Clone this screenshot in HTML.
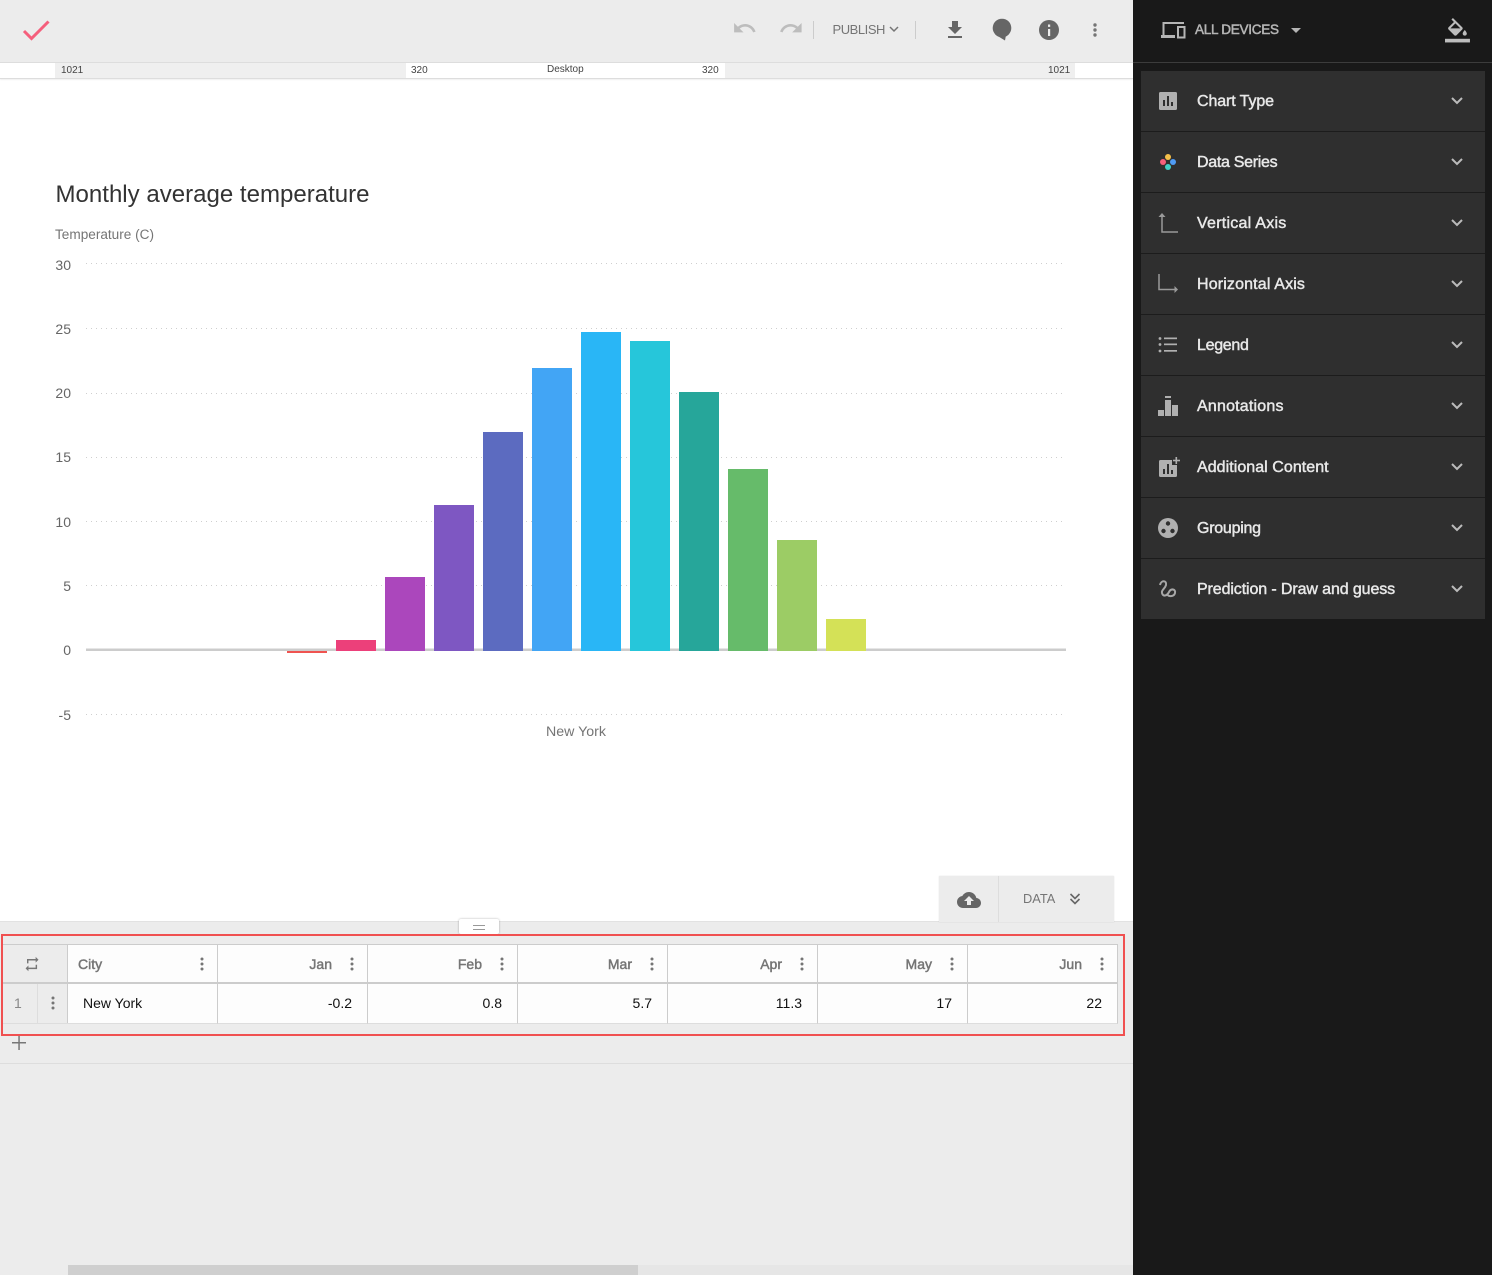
<!DOCTYPE html>
<html><head><meta charset="utf-8"><title>Chart editor</title>
<style>
html,body{margin:0;padding:0;width:1492px;height:1275px;overflow:hidden;background:#fff;font-family:"Liberation Sans",sans-serif}
.a,.t{position:absolute}
.t{white-space:nowrap}
.row{position:absolute;left:1141px;width:344px;height:60px;background:#2f2f2f;border-bottom:1px solid #1c1c1c}
.row span{position:absolute;left:56px;top:1px;line-height:59px;font-size:16px;color:#e8e8e8;-webkit-text-stroke:.45px #e8e8e8;white-space:nowrap}
.th,.td{position:absolute;width:149px;background:#fdfdfd;border-right:1px solid #ccc;box-sizing:content-box}
.th{top:945px;height:37px;line-height:38px;font-size:14px;color:#757575;-webkit-text-stroke:.45px #757575;text-align:right}
.th span{position:absolute;right:35px}
.td{top:984px;height:39px;line-height:39px;font-size:14px;color:#111;text-align:right;border-bottom:1px solid #ddd}
.td span{position:absolute;right:15px}
svg{position:absolute;left:0;top:0}
</style></head><body>

<div class="a" style="left:0;top:0;width:1133px;height:62px;background:#ececec"></div>
<div class="a" style="left:0;top:62px;width:1133px;height:17px;background:#fff;border-top:1px solid #ddd;border-bottom:1px solid #ddd;box-sizing:border-box;box-shadow:0 1px 1px rgba(0,0,0,.06)"></div>
<div class="a" style="left:55px;top:63px;width:351px;height:15px;background:#efefef"></div>
<div class="a" style="left:725px;top:63px;width:350px;height:15px;background:#efefef"></div>
<div class="t" style="left:61px;top:63px;line-height:15px;font-size:10px;color:#444">1021</div>
<div class="t" style="left:411px;top:63px;line-height:15px;font-size:10px;color:#444">320</div>
<div class="t" style="left:547px;top:62px;line-height:15px;font-size:10px;color:#444">Desktop</div>
<div class="t" style="left:702px;top:63px;line-height:15px;font-size:10px;color:#444">320</div>
<div class="t" style="left:1048px;top:63px;line-height:15px;font-size:10px;color:#444">1021</div>
<div class="t" style="left:832.5px;top:21px;line-height:18px;font-size:13px;letter-spacing:-.45px;color:#757575">PUBLISH</div>

<!-- sidebar -->
<div class="a" style="left:1133px;top:0;width:359px;height:1275px;background:#191919"></div>
<div class="a" style="left:1133px;top:62px;width:359px;height:1px;background:#3c3c3c"></div>
<div class="t" style="left:1195px;top:20px;line-height:20px;font-size:13.5px;letter-spacing:-.25px;color:#b5b5b5;-webkit-text-stroke:.5px #b5b5b5">ALL DEVICES</div>
<div class="row" style="top:71px"><span style="letter-spacing:-.1px">Chart Type</span></div>
<div class="row" style="top:132px"><span style="letter-spacing:-.3px">Data Series</span></div>
<div class="row" style="top:193px"><span style="letter-spacing:.25px">Vertical Axis</span></div>
<div class="row" style="top:254px"><span style="letter-spacing:.15px">Horizontal Axis</span></div>
<div class="row" style="top:315px"><span style="letter-spacing:-.3px">Legend</span></div>
<div class="row" style="top:376px"><span style="letter-spacing:.2px">Annotations</span></div>
<div class="row" style="top:437px"><span style="letter-spacing:.05px">Additional Content</span></div>
<div class="row" style="top:498px"><span style="letter-spacing:-.25px">Grouping</span></div>
<div class="row" style="top:559px;border-bottom:0"><span style="letter-spacing:-.11px">Prediction - Draw and guess</span></div>

<!-- data area -->
<div class="a" style="left:0;top:921px;width:1133px;height:354px;background:#ececec;border-top:1px solid #e2e2e2;box-sizing:border-box"></div>
<div class="a" style="left:939px;top:876px;width:175px;height:46px;background:#ececec;box-shadow:0 0 1px rgba(0,0,0,.15)"></div>
<div class="a" style="left:998px;top:876px;width:1px;height:46px;background:#ddd"></div>
<div class="t" style="left:1023px;top:890px;line-height:18px;font-size:12.8px;color:#757575">DATA</div>
<div class="a" style="left:459px;top:919px;width:40px;height:15px;background:#fff;border-radius:2px;box-shadow:0 0 2px rgba(0,0,0,.3)"></div>
<div class="a" style="left:473px;top:925px;width:12px;height:1px;background:#999"></div>
<div class="a" style="left:473px;top:929px;width:12px;height:1px;background:#999"></div>

<!-- table -->
<div class="a" style="left:2px;top:944px;width:1116px;height:1px;background:#ccc"></div>
<div class="a" style="left:2px;top:982px;width:1116px;height:2px;background:#ccc"></div>
<div class="a" style="left:37px;top:984px;width:1px;height:39px;background:#ddd"></div>
<div class="a" style="left:67px;top:945px;width:1px;height:78px;background:#ccc"></div>
<div class="a" style="left:2px;top:1023px;width:66px;height:1px;background:#ddd"></div>

<div class="th" style="left:68px;text-align:left"><span style="left:10px;right:auto">City</span></div>
<div class="th" style="left:218px"><span>Jan</span></div>
<div class="th" style="left:368px"><span>Feb</span></div>
<div class="th" style="left:518px"><span>Mar</span></div>
<div class="th" style="left:668px"><span>Apr</span></div>
<div class="th" style="left:818px"><span>May</span></div>
<div class="th" style="left:968px"><span>Jun</span></div>
<div class="td" style="left:68px;text-align:left"><span style="left:15px;right:auto">New York</span></div>
<div class="td" style="left:218px"><span>-0.2</span></div>
<div class="td" style="left:368px"><span>0.8</span></div>
<div class="td" style="left:518px"><span>5.7</span></div>
<div class="td" style="left:668px"><span>11.3</span></div>
<div class="td" style="left:818px"><span>17</span></div>
<div class="td" style="left:968px"><span>22</span></div>
<div class="t" style="left:14px;top:984px;line-height:39px;font-size:14px;color:#888">1</div>

<div class="a" style="left:0;top:1063px;width:1133px;height:1px;background:#ddd"></div>
<div class="a" style="left:638px;top:1265px;width:495px;height:10px;background:#e6e6e6"></div>
<div class="a" style="left:68px;top:1265px;width:570px;height:10px;background:#cfcfcf"></div>
<div class="a" style="left:1px;top:934px;width:1124px;height:102px;border:2px solid #f05050;box-sizing:border-box"></div>

<svg width="1492" height="1275" viewBox="0 0 1492 1275" xmlns="http://www.w3.org/2000/svg" style="pointer-events:none">
  <!-- top bar icons -->
  <polyline points="24,31 31.5,38.5 48.5,21.5" fill="none" stroke="#f55f7c" stroke-width="3"/>
  <path transform="translate(732,15.6) scale(1.05)" fill="#bdbdbd" d="M12.5 8c-2.65 0-5.05.99-6.9 2.6L2 7v9h9l-3.62-3.62c1.39-1.16 3.16-1.88 5.12-1.88 3.54 0 6.55 2.31 7.6 5.5l2.37-.78C21.08 11.03 17.15 8 12.5 8z"/>
  <path transform="translate(778.5,15.6) scale(1.05)" fill="#bdbdbd" d="M18.4 10.6C16.55 8.99 14.15 8 11.5 8c-4.65 0-8.58 3.03-9.96 7.22L3.9 16c1.05-3.19 4.05-5.5 7.6-5.5 1.95 0 3.73.72 5.12 1.88L13 16h9V7l-3.6 3.6z"/>
  <rect x="813" y="21" width="1" height="18" fill="#ccc"/>
  <rect x="915" y="21" width="1" height="18" fill="#ccc"/>
  <polyline points="890,27 894,31 898,27" fill="none" stroke="#757575" stroke-width="1.5"/>
  <path transform="translate(943,18)" fill="#666" d="M19 9h-4V3H9v6H5l7 7 7-7zM5 18v2h14v-2H5z"/>
  <circle cx="1002" cy="28" r="9.3" fill="#666"/>
  <polygon points="996,35 1006,35 1005,40.5" fill="#666"/>
  <circle cx="1049" cy="30" r="10" fill="#666"/>
  <rect x="1048" y="29" width="2.2" height="7" fill="#ececec"/>
  <rect x="1048" y="24.5" width="2.2" height="2.4" fill="#ececec"/>
  <g fill="#757575"><circle cx="1095" cy="25" r="1.7"/><circle cx="1095" cy="30" r="1.7"/><circle cx="1095" cy="35" r="1.7"/></g>

  <!-- chart -->
  <g stroke="#cfcfcf" stroke-width="1" stroke-dasharray="1 4" fill="none">
    <line x1="86" x2="1064" y1="263.5" y2="263.5"/>
    <line x1="86" x2="1064" y1="328.5" y2="328.5"/>
    <line x1="86" x2="1064" y1="393.5" y2="393.5"/>
    <line x1="86" x2="1064" y1="457.5" y2="457.5"/>
    <line x1="86" x2="1064" y1="521.5" y2="521.5"/>
    <line x1="86" x2="1064" y1="585.5" y2="585.5"/>
    <line x1="86" x2="1064" y1="714.5" y2="714.5"/>
  </g>
  <rect x="86" y="648.5" width="980" height="2.5" fill="#ccc"/>
  <rect x="287" y="651" width="40" height="2" fill="#ef5350"/>
  <rect x="336" y="640" width="40" height="11" fill="#ec407a"/>
  <rect x="385" y="577" width="40" height="74" fill="#ab47bc"/>
  <rect x="434" y="505" width="40" height="146" fill="#7e57c2"/>
  <rect x="483" y="432" width="40" height="219" fill="#5c6bc0"/>
  <rect x="532" y="368" width="40" height="283" fill="#42a5f5"/>
  <rect x="581" y="332" width="40" height="319" fill="#29b6f6"/>
  <rect x="630" y="341" width="40" height="310" fill="#26c6da"/>
  <rect x="679" y="392" width="40" height="259" fill="#26a69a"/>
  <rect x="728" y="469" width="40" height="182" fill="#66bb6a"/>
  <rect x="777" y="540" width="40" height="111" fill="#9ccc65"/>
  <rect x="826" y="619" width="40" height="32" fill="#d4e157"/>
  <text x="55.5" y="202" font-size="24" fill="#333" textLength="314" lengthAdjust="spacingAndGlyphs" font-family="Liberation Sans, sans-serif">Monthly average temperature</text>
  <text x="55" y="239" font-size="13.5" fill="#757575" textLength="99" lengthAdjust="spacingAndGlyphs" font-family="Liberation Sans, sans-serif">Temperature (C)</text>
  <g font-size="14" fill="#666" text-anchor="end" font-family="Liberation Sans, sans-serif">
    <text x="71" y="270">30</text><text x="71" y="334">25</text><text x="71" y="398">20</text>
    <text x="71" y="462">15</text><text x="71" y="527">10</text><text x="71" y="591">5</text>
    <text x="71" y="655">0</text><text x="71" y="720">-5</text>
  </g>
  <text x="546" y="736" font-size="14" fill="#757575" textLength="60" lengthAdjust="spacingAndGlyphs" font-family="Liberation Sans, sans-serif">New York</text>

  <!-- sidebar header icons -->
  <g fill="none" stroke="#b5b5b5" stroke-width="2">
    <path d="M1163.5 36V23H1184"/>
    <rect x="1178" y="27" width="6.5" height="10.5"/>
  </g>
  <rect x="1161" y="35" width="14" height="3" fill="#b5b5b5"/>
  <polygon points="1291,28 1301,28 1296,33" fill="#b5b5b5"/>
  <g transform="translate(1445,18) scale(1.04)" fill="#bdbdbd">
    <path d="M16.56 8.94L7.62 0 6.21 1.41l2.38 2.38-5.15 5.15c-.59.59-.59 1.54 0 2.12l5.5 5.5c.29.29.68.44 1.06.44s.77-.15 1.06-.44l5.5-5.5c.59-.58.59-1.53 0-2.12zM5.21 10L10 5.21 14.79 10H5.21zM19 11.5s-2 2.17-2 3.5c0 1.1.9 2 2 2s2-.9 2-2c0-1.33-2-3.5-2-3.5z"/>
    <rect x="0" y="20" width="24" height="3.5"/>
  </g>

  <!-- row icons -->
  <rect x="1159" y="92" width="18" height="18" rx="1.5" fill="#b0b0b0"/>
  <g fill="#2f2f2f"><rect x="1163" y="100" width="2" height="6"/><rect x="1167" y="96" width="2" height="10"/><rect x="1171" y="102" width="2" height="4"/></g>
  <circle cx="1168" cy="157" r="3" fill="#f5c04a"/><circle cx="1163" cy="162" r="3" fill="#f55f7c"/>
  <circle cx="1173" cy="162" r="3" fill="#4f9cf5"/><circle cx="1168" cy="167" r="3" fill="#3fd0c9"/>
  <path d="M1162 215V232H1178" fill="none" stroke="#9a9a9a" stroke-width="1.5"/>
  <polygon points="1158.5,217 1162,213 1165.5,217" fill="#9a9a9a"/>
  <path d="M1159 274V289.5H1176" fill="none" stroke="#9a9a9a" stroke-width="1.5"/>
  <polygon points="1174.5,286 1178,289.5 1174.5,293" fill="#9a9a9a"/>
  <g fill="#b0b0b0">
    <circle cx="1160" cy="338.5" r="1.4"/><circle cx="1160" cy="344.5" r="1.4"/><circle cx="1160" cy="351" r="1.4"/>
    <rect x="1164" y="337.5" width="13" height="1.7"/><rect x="1164" y="343.5" width="13" height="1.7"/><rect x="1164" y="350" width="13" height="1.7"/>
    <rect x="1158" y="410" width="6" height="6"/><rect x="1165" y="400" width="6" height="16"/><rect x="1172" y="405" width="6" height="11"/><rect x="1165" y="396" width="6" height="2"/>
    <path d="M1159 461.5a1.5 1.5 0 0 1 1.5-1.5H1172V465H1177V475.5a1.5 1.5 0 0 1-1.5 1.5H1160.5a1.5 1.5 0 0 1-1.5-1.5z"/>
    <rect x="1175.5" y="457" width="1.6" height="7"/><rect x="1173" y="459.7" width="7" height="1.6"/>
    <circle cx="1168" cy="528" r="10"/>
  </g>
  <g fill="#2f2f2f"><rect x="1163" y="469" width="2" height="5"/><rect x="1167" y="464" width="2" height="10"/><rect x="1171" y="470" width="2" height="4"/>
    <circle cx="1168" cy="523.5" r="2.2"/><circle cx="1163.5" cy="531" r="2.2"/><circle cx="1172.5" cy="531" r="2.2"/></g>
  <path d="M1160 585C1161 580 1167 580 1166 585C1165 589 1161 590 1162 593C1163 597 1167 596 1169 592C1171 588 1176 589 1175 593C1174 597 1168 597 1167 594" fill="none" stroke="#a8a8a8" stroke-width="2"/>
  <g fill="none" stroke="#bbb" stroke-width="2">
    <polyline points="1452,98 1457,103 1462,98"/><polyline points="1452,159 1457,164 1462,159"/>
    <polyline points="1452,220 1457,225 1462,220"/><polyline points="1452,281 1457,286 1462,281"/>
    <polyline points="1452,342 1457,347 1462,342"/><polyline points="1452,403 1457,408 1462,403"/>
    <polyline points="1452,464 1457,469 1462,464"/><polyline points="1452,525 1457,530 1462,525"/>
    <polyline points="1452,586 1457,591 1462,586"/>
  </g>

  <!-- data tab icons -->
  <path transform="translate(957,888)" fill="#666" d="M19.35 10.04C18.67 6.59 15.64 4 12 4 9.11 4 6.6 5.64 5.35 8.04 2.34 8.36 0 10.91 0 14c0 3.31 2.69 6 6 6h13c2.76 0 5-2.24 5-5 0-2.64-2.05-4.78-4.65-4.96zM14 13v4h-4v-4H7l5-5 5 5h-3z"/>
  <g fill="none" stroke="#666" stroke-width="1.6"><polyline points="1070.5,894 1075,898.5 1079.5,894"/><polyline points="1070.5,899 1075,903.5 1079.5,899"/></g>

  <!-- table icons -->
  <path transform="translate(23.4,955.4) scale(.72)" fill="#777" d="M7 7h10v3l4-4-4-4v3H5v6h2V7zm10 10H7v-3l-4 4 4 4v-3h12v-6h-2v4z"/>
  <g fill="#757575">
    <circle cx="202" cy="959" r="1.5"/><circle cx="202" cy="964" r="1.5"/><circle cx="202" cy="969" r="1.5"/>
    <circle cx="352" cy="959" r="1.5"/><circle cx="352" cy="964" r="1.5"/><circle cx="352" cy="969" r="1.5"/>
    <circle cx="502" cy="959" r="1.5"/><circle cx="502" cy="964" r="1.5"/><circle cx="502" cy="969" r="1.5"/>
    <circle cx="652" cy="959" r="1.5"/><circle cx="652" cy="964" r="1.5"/><circle cx="652" cy="969" r="1.5"/>
    <circle cx="802" cy="959" r="1.5"/><circle cx="802" cy="964" r="1.5"/><circle cx="802" cy="969" r="1.5"/>
    <circle cx="952" cy="959" r="1.5"/><circle cx="952" cy="964" r="1.5"/><circle cx="952" cy="969" r="1.5"/>
    <circle cx="1102" cy="959" r="1.5"/><circle cx="1102" cy="964" r="1.5"/><circle cx="1102" cy="969" r="1.5"/>
    <circle cx="53" cy="998" r="1.5"/><circle cx="53" cy="1003" r="1.5"/><circle cx="53" cy="1008" r="1.5"/>
  </g>
  <rect x="12" y="1042" width="14" height="1.5" fill="#777"/>
  <rect x="18.3" y="1036" width="1.5" height="14" fill="#777"/>
</svg>
</body></html>
